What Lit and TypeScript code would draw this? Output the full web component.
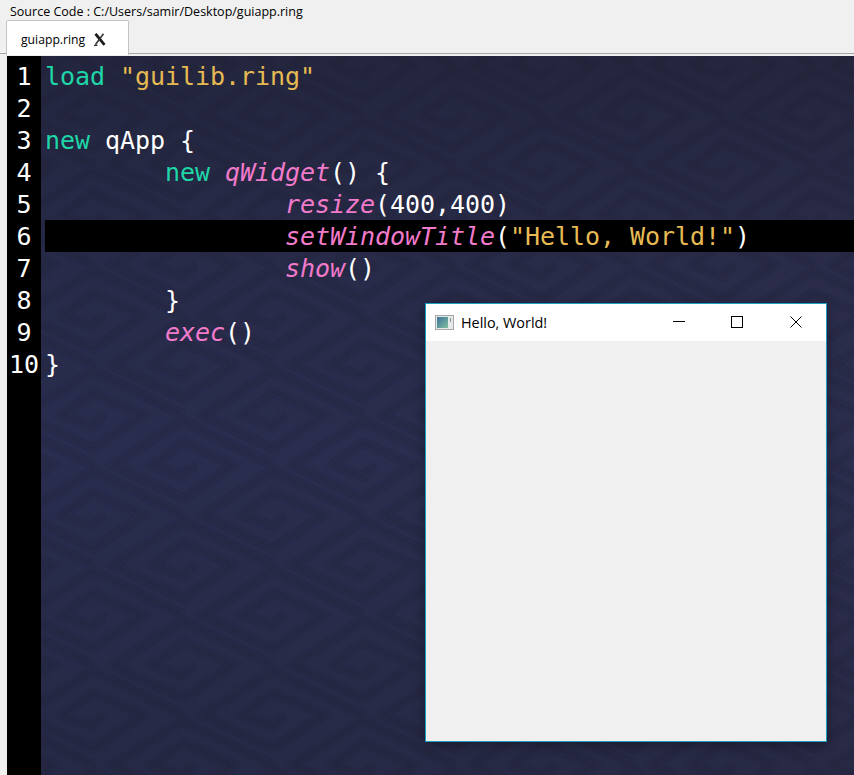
import { LitElement, html, css, svg } from "lit";
import { customElement } from "lit/decorators.js";

type Tok = [string, string];
const LINES: Tok[][] = [
  [["kw", "load"], ["pl", " "], ["st", '"guilib.ring"']],
  [],
  [["kw", "new"], ["pl", " qApp {"]],
  [["pl", "        "], ["kw", "new"], ["pl", " "], ["fn", "qWidget"], ["pl", "() {"]],
  [["pl", "                "], ["fn", "resize"], ["pl", "(400,400)"]],
  [["pl", "                "], ["fn", "setWindowTitle"], ["pl", "("], ["st", '"Hello, World!"'], ["pl", ")"]],
  [["pl", "                "], ["fn", "show"], ["pl", "()"]],
  [["pl", "        }"]],
  [["pl", "        "], ["fn", "exec"], ["pl", "()"]],
  [["pl", "}"]],
];

const HW = 90;
const HH = 50;

/** One square-spiral meander, stretched into a diamond around (cx, cy). */
function spiral(cx: number, cy: number): string {
  const dirs = [
    [1, 0],
    [0, -1],
    [-1, 0],
    [0, 1],
  ];
  const pts: string[] = [];
  let s = 1;
  for (let i = 0; i < 10 && s > 0.1; i++) {
    const [dx, dy] = dirs[i % 4];
    pts.push(`${(cx + dx * HW * s).toFixed(1)} ${(cy + dy * HH * s).toFixed(1)}`);
    s -= 0.11;
  }
  return "M" + pts.join("L");
}

function spirals(): string[] {
  const out: string[] = [];
  for (let row = -1; row < 16; row++) {
    for (let col = -1; col < 7; col++) {
      const cx = 176 + (col - 1) * HW * 2 + (row % 2 ? HW : 0);
      const cy = 9 + row * HH;
      out.push(spiral(cx, cy));
    }
  }
  return out;
}

@customElement("app-root")
export class AppRoot extends LitElement {
  static styles = css`
    :host {
      display: flex;
      flex-direction: column;
      width: 854px;
      height: 775px;
      overflow: hidden;
      background: #f0f0f0;
      font-family: "Open Sans", "Noto Sans", sans-serif;
      position: relative;
    }
    .path {
      height: 20px;
      flex: none;
      padding-left: 10px;
      font-size: 12.5px;
      line-height: 24px;
      color: #000;
      white-space: nowrap;
    }
    .tabbar {
      flex: none;
      height: 34px;
      padding-left: 6px;
      border-bottom: 1px solid #a6a6a6;
      box-sizing: border-box;
      display: flex;
      align-items: flex-start;
    }
    .tab {
      flex: none;
      width: 123px;
      height: 35px;
      box-sizing: border-box;
      background: #fff;
      border: 1px solid #c4c4c4;
      border-bottom: none;
      border-radius: 2px 2px 0 0;
      display: flex;
      align-items: center;
      padding: 2px 0 0 14px;
      gap: 9px;
      font-size: 12.2px;
      color: #000;
    }
    .tab svg {
      display: block;
    }
    .editor {
      flex: 1;
      display: flex;
      margin-left: 7px;
      margin-top: 2px;
      background: linear-gradient(90deg, #292d4e, #2c2e4e);
      position: relative;
      min-height: 0;
      overflow: hidden;
      font-family: "DejaVu Sans Mono", monospace;
      font-size: 25px;
    }
    .pattern {
      position: absolute;
      inset: 0;
      width: 100%;
      height: 100%;
    }
    .gutter {
      flex: none;
      width: 34px;
      background: #000;
      color: #fff;
      padding-top: 4px;
      text-align: center;
      position: relative;
      box-sizing: border-box;
    }
    .code {
      flex: 1;
      padding: 4px 0 0 4px;
      position: relative;
      min-width: 0;
      letter-spacing: -0.05px;
    }
    .num,
    .line {
      height: 32px;
      line-height: 34px;
      white-space: pre;
    }
    .line.current {
      background: #000;
    }
    .kw { color: #1ed6a8; }
    .st { color: #e6ba52; }
    .fn { color: #f27acb; font-style: italic; }
    .pl { color: #fff; }
    .window {
      position: absolute;
      left: 425px;
      top: 303px;
      width: 402px;
      height: 439px;
      box-sizing: border-box;
      border: 1px solid #1a9fc0;
      background: #f0f0f0;
      display: flex;
      flex-direction: column;
      box-shadow: 0 3px 12px rgba(0, 0, 0, 0.3);
    }
    .titlebar {
      flex: none;
      height: 37px;
      box-sizing: border-box;
      padding: 0 1px 1px 9px;
      background: #fff;
      display: flex;
      align-items: center;
      font-family: "Open Sans", "Noto Sans", sans-serif;
      font-size: 14.4px;
      color: #000;
    }
    .appicon {
      flex: none;
      margin-right: 7px;
    }
    .title {
      flex: 1;
      white-space: nowrap;
    }
    .wbtn {
      flex: none;
      width: 58.5px;
      height: 36px;
      display: flex;
      align-items: center;
      justify-content: center;
    }
    .wbtn svg {
      display: block;
    }
  `;

  private pattern() {
    return html`<svg class="pattern" viewBox="0 0 847 719" preserveAspectRatio="none">
      <defs>
        <linearGradient id="shade" x1="0" y1="0" x2="0" y2="1">
          <stop offset="0" stop-color="#1b1c28" stop-opacity="0.42"></stop>
          <stop offset="0.32" stop-color="#1b1c28" stop-opacity="0.12"></stop>
          <stop offset="0.55" stop-color="#1b1c28" stop-opacity="0"></stop>
          <stop offset="1" stop-color="#1b1c28" stop-opacity="0.24"></stop>
        </linearGradient>
        <filter id="soft"><feGaussianBlur stdDeviation="1.8"></feGaussianBlur></filter>
      </defs>
      <g fill="none" stroke="#1f2236" stroke-width="7" stroke-opacity="0.3" filter="url(#soft)">
        ${spirals().map((d) => svg`<path d=${d}></path>`)}
      </g>
      <rect width="847" height="719" fill="url(#shade)"></rect>
    </svg>`;
  }

  render() {
    return html`
      <div class="path">Source Code : C:/Users/samir/Desktop/guiapp.ring</div>
      <div class="tabbar">
        <div class="tab">
          <span>guiapp.ring</span>
          <svg width="12" height="13" viewBox="0 0 12 13">
            <path d="M1.5 0.8 L10.5 11.8" stroke="#1c1c1c" stroke-width="2.8" fill="none"></path>
            <path d="M9.5 0.8 L1.5 11.5 M0 12.4 L3.5 12.4" stroke="#333" stroke-width="1.5" fill="none"></path>
          </svg>
        </div>
      </div>
      <div class="editor">
        ${this.pattern()}
        <div class="gutter">
          ${LINES.map((_, i) => html`<div class="num">${i + 1}</div>`)}
        </div>
        <div class="code">
          ${LINES.map(
            (toks, i) => html`<div class="line ${i === 5 ? "current" : ""}">${toks.map(
              ([c, t]) => html`<span class=${c}>${t}</span>`
            )}</div>`
          )}
        </div>
      </div>
      <div class="window">
        <div class="titlebar">
          <svg class="appicon" width="19" height="15" viewBox="0 0 19 15">
            <defs>
              <linearGradient id="ic" x1="0" y1="0" x2="1" y2="1">
                <stop offset="0" stop-color="#3f6f9a"></stop>
                <stop offset="1" stop-color="#7fc0a0"></stop>
              </linearGradient>
            </defs>
            <rect x="0.5" y="0.5" width="18" height="14" fill="#e6e9e9" stroke="#a8a8a8"></rect>
            <rect x="2" y="2" width="11" height="11" fill="url(#ic)"></rect>
            <rect x="15" y="3" width="1" height="4" fill="#7a9a96"></rect>
          </svg>
          <span class="title">Hello, World!</span>
          <div class="wbtn">
            <svg width="12" height="12" viewBox="0 0 12 12"><path d="M0 5.5H12" stroke="#000"></path></svg>
          </div>
          <div class="wbtn">
            <svg width="12" height="12" viewBox="0 0 12 12"><rect x="0.5" y="0.5" width="11" height="11" fill="none" stroke="#000"></rect></svg>
          </div>
          <div class="wbtn">
            <svg width="12" height="12" viewBox="0 0 12 12"><path d="M0.5 0.5L11.5 11.5M11.5 0.5L0.5 11.5" stroke="#000" fill="none"></path></svg>
          </div>
        </div>
      </div>
    `;
  }
}
